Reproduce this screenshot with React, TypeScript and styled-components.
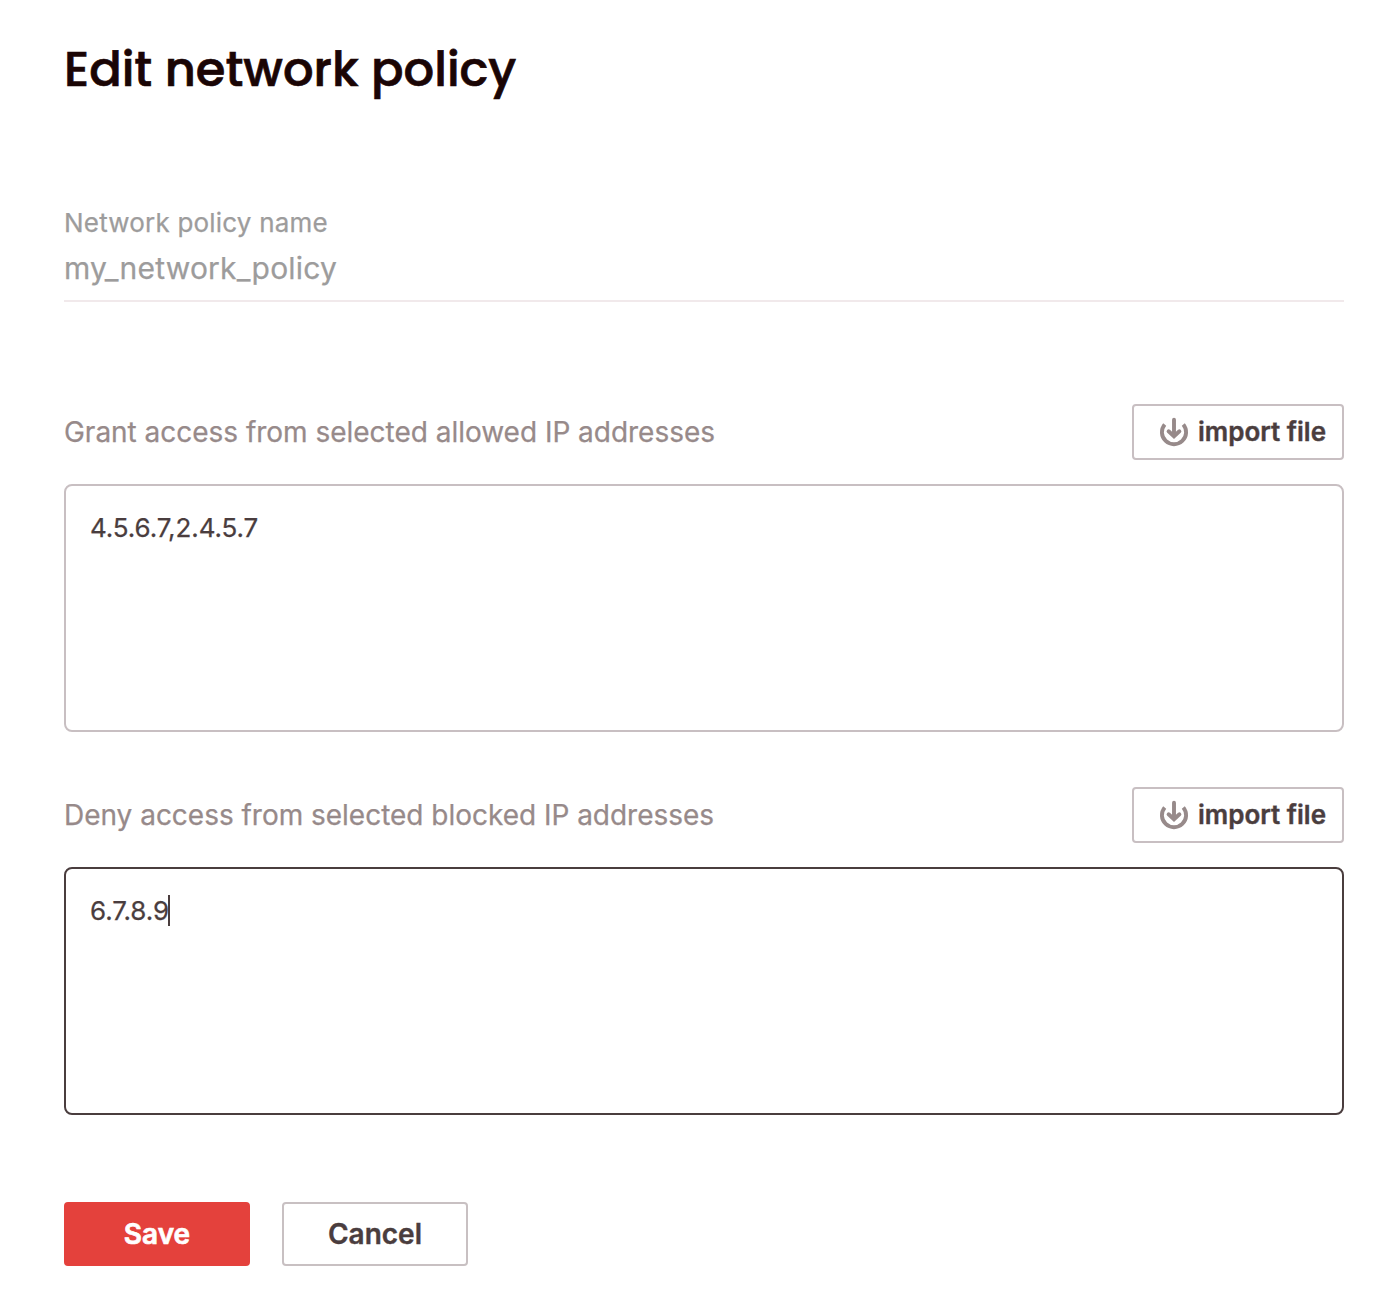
import React from 'react';
import styled, { createGlobalStyle } from 'styled-components';

const Global = createGlobalStyle`
  * { box-sizing: border-box; }
  body {
    margin: 0;
    background: #fff;
    font-family: Inter, "Liberation Sans", sans-serif;
    -webkit-text-stroke: 0.25px currentColor;
  }
`;

const Page = styled.main`
  display: flex;
  flex-direction: column;
  width: 1386px;
  height: 1300px;
  padding: 40px 42px 0 64px;
`;

const Title = styled.h1`
  align-self: flex-start;
  margin: 0 0 105px;
  white-space: nowrap;
  font: 500 48px/60px Poppins, Inter, sans-serif;
  color: #1a0505;
  -webkit-text-stroke: 0.7px #1a0505;
`;

const NameField = styled.div`
  display: flex;
  flex-direction: column;
  flex-shrink: 0;
  gap: 8px;
  height: 97px;
  margin-bottom: 102px;
  border-bottom: 2px solid #f1e9eb;
  letter-spacing: 0.2px;
  color: #9d9c9c;
`;

const NameLabel = styled.span`
  font-size: 26px;
  line-height: 36px;
`;

const NameValue = styled.span`
  font-size: 30px;
  line-height: 38px;
`;

const Section = styled.section`
  display: flex;
  flex-direction: column;
  gap: 24px;
  margin-bottom: 55px;
`;

const SectionHead = styled.div`
  display: flex;
  align-items: center;
  justify-content: space-between;
  height: 56px;
`;

const SectionLabel = styled.span`
  font-size: 28px;
  line-height: 40px;
  letter-spacing: -0.02px;
  color: #978a8a;
`;

const ImportButton = styled.button`
  display: flex;
  align-items: center;
  gap: 9px;
  width: 212px;
  height: 56px;
  padding: 0 0 0 25px;
  border: 2px solid #c8bfc2;
  border-radius: 4px;
  background: #fff;
  font: 600 26px/32px Inter, sans-serif;
  color: #4a3d3e;
  white-space: nowrap;
  -webkit-text-stroke: 0.4px #4a3d3e;
`;

const AddressBox = styled.div<{ $active?: boolean }>`
  display: flex;
  align-items: flex-start;
  height: 248px;
  padding: 24px;
  border: 2px solid ${(p) => (p.$active ? '#4a3d3e' : '#c8bfc2')};
  border-radius: 8px;
  font-size: 26px;
  line-height: 36px;
  letter-spacing: -0.1px;
  color: #4a3d3e;
`;

const Caret = styled.span`
  width: 2px;
  height: 31px;
  margin: 2px 0 0 -1px;
  background: #4a3d3e;
`;

const Actions = styled.div`
  display: flex;
  gap: 32px;
  margin-top: 32px;
`;

const ActionButton = styled.button<{ $primary?: boolean }>`
  width: 186px;
  height: 64px;
  padding: 0;
  border: 2px solid ${(p) => (p.$primary ? '#e4413c' : '#c8c0c2')};
  border-radius: 4px;
  background: ${(p) => (p.$primary ? '#e4413c' : '#fff')};
  color: ${(p) => (p.$primary ? '#fff' : '#4a3d3e')};
  font: 600 28px/36px Inter, sans-serif;
  -webkit-text-stroke: ${(p) => (p.$primary ? '0.7px' : '0.4px')} currentColor;
`;

const ImportIcon = () => (
  <svg width="30" height="30" viewBox="0 0 30 30" fill="none" stroke="#978a8a" strokeWidth="3.9">
    <path d="M5.7 7.4A12.1 12.1 0 1 0 24.3 7.4" />
    <path d="M15 2.8V19M9.6 14.3l5.4 5 5.4-5" strokeLinecap="round" />
  </svg>
);

type AddressSectionProps = { label: string; value: string; active?: boolean };

const AddressSection = ({ label, value, active }: AddressSectionProps) => (
  <Section>
    <SectionHead>
      <SectionLabel>{label}</SectionLabel>
      <ImportButton>
        <ImportIcon />
        import file
      </ImportButton>
    </SectionHead>
    <AddressBox $active={active}>
      {value}
      {active && <Caret />}
    </AddressBox>
  </Section>
);

export default function App() {
  return (
    <>
      <Global />
      <Page>
        <Title>Edit network policy</Title>
        <NameField>
          <NameLabel>Network policy name</NameLabel>
          <NameValue>my_network_policy</NameValue>
        </NameField>
        <AddressSection label="Grant access from selected allowed IP addresses" value="4.5.6.7,2.4.5.7" />
        <AddressSection label="Deny access from selected blocked IP addresses" value="6.7.8.9" active />
        <Actions>
          <ActionButton $primary>Save</ActionButton>
          <ActionButton>Cancel</ActionButton>
        </Actions>
      </Page>
    </>
  );
}
